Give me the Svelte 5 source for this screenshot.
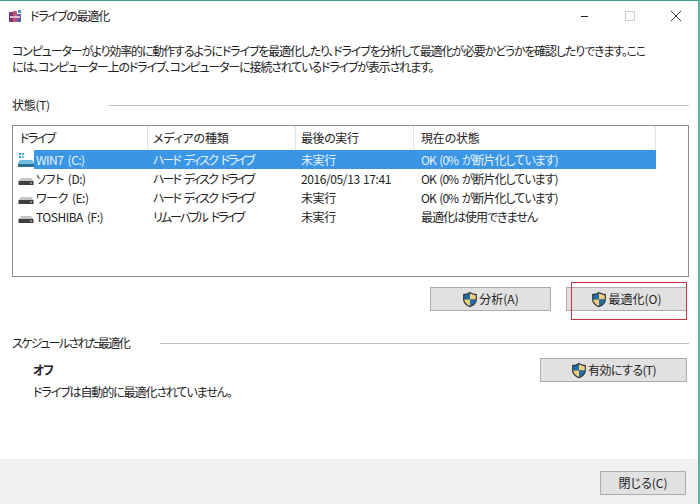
<script lang="ts">
	const columns = [
		{ label: 'ドライブ', width: 135, tight: '-1.6px' },
		{ label: 'メディアの種類', width: 148, tight: '-0.2px' },
		{ label: '最後の実行', width: 118, tight: '-0.4px' },
		{ label: '現在の状態', width: 242, tight: '-0.2px' }
	];

	const drives = [
		{ name: 'WIN7 (C:)', media: 'ハード ディスク ドライブ', last: '未実行', status: 'OK (0% が断片化しています)', system: true },
		{ name: 'ソフト (D:)', media: 'ハード ディスク ドライブ', last: '2016/05/13 17:41', status: 'OK (0% が断片化しています)' },
		{ name: 'ワーク (E:)', media: 'ハード ディスク ドライブ', last: '未実行', status: 'OK (0% が断片化しています)' },
		{ name: 'TOSHIBA (F:)', media: 'リムーバブル ドライブ', last: '未実行', status: '最適化は使用できません' }
	];
</script>

{#snippet shield()}
	<svg class="shield" width="16" height="17" viewBox="0 0 15 16">
		<path d="M7.5 .8 C5.5 2.2 3.4 2.8 1 2.9 V8 C1 11.5 4 14 7.5 15.4 C11 14 14 11.5 14 8 V2.9 C11.6 2.8 9.500 2.200 7.500 .8 Z" fill="#33383f" />
		<path d="M7.500 2 C5.800 3.100 4 3.700 2.100 3.900 V8 H7.500 Z" fill="#1f6ea6" />
		<path d="M7.500 2 C9.200 3.100 11 3.700 12.900 3.900 V8 H7.500 Z" fill="#f0cf7c" />
		<path d="M2.100 8 H7.500 V14.200 C4.800 13 2.400 11 2.100 8 Z" fill="#f0cf7c" />
		<path d="M12.900 8 H7.500 V14.200 C10.200 13 12.600 11 12.900 8 Z" fill="#1f6ea6" />
	</svg>
{/snippet}

{#snippet driveIcon(system: boolean)}
	<svg class="drive" width="16" height="14" viewBox="0 0 16 14">
		{#if system}
			<rect x="1" y="0" width="2" height="2" fill="#2f9fd8" />
			<rect x="4" y="0" width="2" height="2" fill="#2f9fd8" />
			<rect x="1" y="3" width="2" height="2" fill="#2f9fd8" />
			<rect x="4" y="3" width="2" height="2" fill="#6fc3ea" />
			<path d="M2 7 H14 L16 10 V14 H0 V10 Z" fill="#6dbbdf" />
			<rect x="0" y="11" width="16" height="3" fill="#2b6f96" />
		{:else}
			<path d="M3 6 H13 L15.500 9 H.5 Z" fill="#c4c4c4" />
			<rect x=".5" y="9" width="15" height="4" fill="#3f3f3f" />
			<rect x="12" y="10.500" width="2" height="1" fill="#d8d8d8" />
		{/if}
	</svg>
{/snippet}

<div class="window">
	<header class="titlebar">
		<svg class="app-icon" width="14" height="14" viewBox="0 0 14 14">
			<rect x="1" y="3" width="4" height="10" fill="#7d3a70" />
			<rect x="5" y="2" width="4" height="11" fill="#c0557a" />
			<rect x="9" y="5" width="4" height="8" fill="#5a5fa8" />
			<rect x="2" y="7" width="10" height="2" fill="#e2b7cf" />
			<rect x="10" y="1" width="3" height="3" fill="#4f93c9" />
		</svg>
		<span class="title">ドライブの最適化</span>
		<div class="controls">
			<svg width="12" height="12" viewBox="0 0 12 12"><path d="M3 6.500 H10" stroke="#222" /></svg>
			<svg width="12" height="12" viewBox="0 0 12 12"><rect x="1.500" y="1.500" width="9" height="9" fill="none" stroke="#cfcfcf" /></svg>
			<svg width="12" height="12" viewBox="0 0 12 12"><path d="M1 1 L11 11 M11 1 L1 11" stroke="#333" fill="none" /></svg>
		</div>
	</header>

	<main class="content">
		<p class="intro">
			コンピューターがより効率的に動作するようにドライブを最適化したり、ドライブを分析して最適化が必要かどうかを確認したりできます。ここ<br />
			には、コンピューター上のドライブ、コンピューターに接続されているドライブが表示されます。
		</p>

		<div class="group state-group">
			<span>状態(T)</span>
			<i></i>
		</div>

		<div class="list">
			<div class="row head">
				{#each columns as col}
					<div class="cell" style="width: {col.width}px; letter-spacing: {col.tight}">{col.label}</div>
				{/each}
			</div>
			{#each drives as d}
				<div class="row item" class:selected={d.system}>
					<div class="cell name" style="width: {columns[0].width}px">
						{@render driveIcon(!!d.system)}
						<span>{d.name}</span>
					</div>
					<div class="cell media" style="width: {columns[1].width}px">{d.media}</div>
					<div class="cell last" style="width: {columns[2].width}px">{d.last}</div>
					<div class="cell status" style="width: {columns[3].width}px">{d.status}</div>
				</div>
			{/each}
		</div>

		<div class="actions">
			<button class="btn wide">{@render shield()}分析(A)</button>
			<button class="btn wide">{@render shield()}最適化(O)</button>
		</div>

		<div class="group schedule-group">
			<span>スケジュールされた最適化</span>
			<i></i>
		</div>

		<div class="schedule">
			<div class="schedule-text">
				<strong>オフ</strong>
				<span>ドライブは自動的に最適化されていません。</span>
			</div>
			<button class="btn enable">{@render shield()}有効にする(T)</button>
		</div>
	</main>

	<footer class="footer">
		<button class="btn close">閉じる(C)</button>
	</footer>

	<div class="highlight"></div>
</div>

<style>
	:global(body) {
		margin: 0;
		background: #fff;
	}

	.window {
		position: relative;
		box-sizing: border-box;
		width: 700px;
		height: 504px;
		display: flex;
		flex-direction: column;
		background: #fff;
		border-top: 1px solid #3f9e92;
		border-right: 2px solid #5fb0a4;
		color: #222;
		font-family: 'Noto Sans CJK JP', 'Noto Sans', sans-serif;
		font-size: 12px;
		font-feature-settings: 'palt';
		line-height: 16px;
	}

	.titlebar {
		height: 30px;
		flex: none;
		display: flex;
		align-items: center;
		padding-left: 8px;
	}

	.app-icon {
		margin-right: 8px;
	}

	.title {
		letter-spacing: -1.2px;
	}

	.controls {
		margin-left: auto;
		display: flex;
		gap: 34px;
		margin-right: 16px;
	}

	.content {
		flex: 1;
		padding: 12px 9px 0 12px;
		display: flex;
		flex-direction: column;
	}

	.intro {
		margin: 0;
		white-space: nowrap;
		letter-spacing: -1.15px;
	}

	.group {
		display: flex;
		align-items: center;
	}

	.group span {
		flex: none;
	}

	.group i {
		flex: 1;
		height: 1px;
		background: #c4c4c4;
	}

	.state-group {
		margin-top: 22px;
	}

	.state-group span {
		width: 96px;
		letter-spacing: -0.3px;
	}

	.schedule-group {
		margin-top: 24px;
	}

	.schedule-group span {
		width: 148px;
		letter-spacing: -1.6px;
	}

	.list {
		box-sizing: border-box;
		height: 152px;
		margin-top: 12px;
		border: 1px solid #8c8c8c;
	}

	.row {
		display: flex;
	}

	.head {
		height: 24px;
		line-height: 23px;
	}

	.cell {
		box-sizing: border-box;
		padding-left: 5px;
		white-space: nowrap;
	}

	.cell:last-child {
		padding-left: 7px;
	}

	.head .cell {
		border-right: 1px solid #e4e4e4;
	}

	.head .cell:first-child {
		padding-left: 7px;
	}

	.item {
		height: 19px;
		line-height: 19px;
	}

	.item .name {
		display: flex;
		align-items: center;
		gap: 2px;
		letter-spacing: -0.5px;
		word-spacing: 2px;
	}

	.media {
		letter-spacing: -2px;
		word-spacing: 3px;
	}

	.last {
		letter-spacing: -0.4px;
		word-spacing: 1px;
	}

	.status {
		letter-spacing: -1px;
		word-spacing: 2px;
	}

	.selected {
		color: #e8f4fd;
	}

	.selected .cell {
		background: #3a96e4;
	}

	.selected .cell.name {
		background: linear-gradient(to right, #fff 21px, #3a96e4 21px);
	}

	.btn {
		box-sizing: border-box;
		height: 24px;
		display: inline-flex;
		align-items: center;
		justify-content: center;
		gap: 1px;
		padding: 0;
		background: #e1e1e1;
		border: 1px solid #adadad;
		border-radius: 0;
		color: #222;
		font: inherit;
		font-feature-settings: inherit;
	}

	.actions {
		display: flex;
		justify-content: flex-end;
		gap: 15px;
		margin-top: 10px;
		padding-right: 2px;
	}

	.wide {
		width: 121px;
	}

	.schedule {
		position: relative;
		display: flex;
		justify-content: space-between;
		padding: 0 2px 0 21px;
		margin-top: 1px;
	}

	.schedule-text {
		display: flex;
		flex-direction: column;
		gap: 6px;
		margin-top: 10px;
		letter-spacing: -1.1px;
	}

	.enable {
		width: 147px;
		margin-top: 6px;
		letter-spacing: -0.6px;
	}

	.footer {
		flex: none;
		box-sizing: border-box;
		height: 45px;
		display: flex;
		justify-content: flex-end;
		align-items: flex-start;
		padding: 12px 12px 0 0;
		background: #f0f0f0;
	}

	.close {
		width: 86px;
	}

	.highlight {
		position: absolute;
		left: 571px;
		top: 281px;
		width: 114px;
		height: 36px;
		border: 1px solid #c8323c;
		pointer-events: none;
	}
</style>
